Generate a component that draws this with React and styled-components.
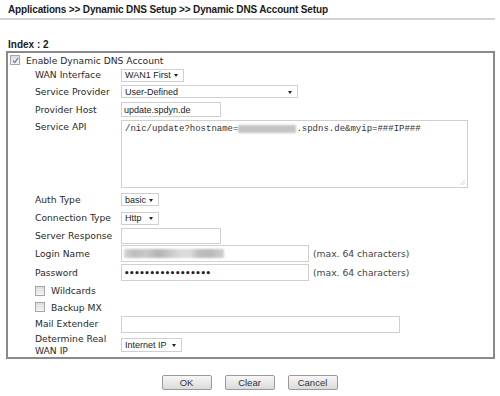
import React from 'react';
import styled, { createGlobalStyle } from 'styled-components';

const GlobalStyle = createGlobalStyle`
  html, body {
    margin: 0;
    padding: 0;
    background: #fff;
  }
  body {
    font-family: 'DejaVu Sans', Verdana, sans-serif;
    color: #222;
  }
`;

const Page = styled.div`
  width: 500px;
  height: 396px;
  overflow: hidden;
`;

const Title = styled.h1`
  margin: 0;
  width: 487px;
  padding: 3px 0 2px 8px;
  height: 13px;
  line-height: 13px;
  border-bottom: 2px solid #d2d2d2;
  font-family: 'Liberation Sans', Arial, sans-serif;
  font-size: 10px;
  letter-spacing: -0.15px;
  font-weight: bold;
  color: #1a1a1a;
  white-space: nowrap;
`;

const IndexLabel = styled.div`
  margin-top: 19px;
  padding-left: 8px;
  height: 12px;
  line-height: 12px;
  font-family: 'Liberation Sans', Arial, sans-serif;
  font-size: 10px;
  font-weight: bold;
  color: #1a1a1a;
`;

const Panel = styled.div`
  margin-left: 6px;
  width: 485px;
  border: 2px solid #8a8a8a;
  display: flex;
  flex-direction: column;
`;

const Row = styled.div`
  height: ${(p) => p.$h}px;
  display: flex;
  align-items: ${(p) => (p.$top ? 'flex-start' : 'center')};
  padding-left: ${(p) => (p.$indent ?? 27)}px;
  font-size: 9.2px;
  color: #2a2a2a;
`;

const Label = styled.div`
  width: 86px;
  flex: none;
  line-height: 12px;
  padding-top: ${(p) => (p.$top ? 2 : 0)}px;
`;

const Box = styled.span`
  width: 8px;
  height: 8px;
  flex: none;
  border: 1px solid #a6a6a6;
  background: linear-gradient(#dcdcdc, #f4f4f4);
  display: inline-flex;
  align-items: center;
  justify-content: center;
  margin-right: 6px;
`;

const CheckBox = ({ checked }) => (
  <Box>
    {checked && (
      <svg width="7" height="7" viewBox="0 0 7 7">
        <path d="M1 3.6 L2.8 5.6 L6 1" fill="none" stroke="#5a7aa8" strokeWidth="1.2" />
      </svg>
    )}
  </Box>
);

const Select = styled.div`
  position: relative;
  width: ${(p) => p.$w}px;
  height: ${(p) => p.$h || 13}px;
  box-sizing: border-box;
  border: 1px solid #cfcfcf;
  background: #fff;
  padding-left: 3px;
  display: flex;
  align-items: center;
  font-family: 'Liberation Sans', Arial, sans-serif;
  font-size: 9px;
  color: #222;
  &::after {
    content: '';
    position: absolute;
    right: 5px;
    top: 50%;
    margin-top: -1px;
    border-left: 2.5px solid transparent;
    border-right: 2.5px solid transparent;
    border-top: 3px solid #222;
  }
`;

const TextBox = styled.div`
  width: ${(p) => p.$w}px;
  height: ${(p) => p.$h}px;
  box-sizing: border-box;
  border: 1px solid #d0d0d0;
  background: #fff;
  padding-left: 2px;
  display: flex;
  align-items: center;
  font-family: ${(p) => (p.$dots ? "'DejaVu Sans', sans-serif" : "'Liberation Sans', Arial, sans-serif")};
  font-size: ${(p) => (p.$dots ? 8.6 : 9)}px;
  font-weight: ${(p) => (p.$dots ? 'bold' : 'normal')};
  letter-spacing: ${(p) => (p.$dots ? -0.4 : 0)}px;
  color: #222;
`;

const ApiArea = styled.div`
  position: relative;
  margin-top: 1px;
  width: 347px;
  height: 68px;
  box-sizing: border-box;
  border: 1px solid #d0d0d0;
  padding: 3px 3px;
  font-family: 'Liberation Mono', 'Courier New', monospace;
  font-size: 9px;
  line-height: 10px;
  color: #333;
  white-space: nowrap;
`;

const Grip = styled.svg`
  position: absolute;
  right: 1px;
  bottom: 1px;
`;

const Blur = styled.span`
  display: inline-block;
  vertical-align: middle;
  width: ${(p) => p.$w}px;
  height: ${(p) => p.$h}px;
  background: ${(p) => p.$bg};
  filter: blur(1.2px);
`;

const Hint = styled.span`
  margin-left: 4px;
  color: #444;
`;

const Buttons = styled.div`
  margin-top: 16px;
  display: flex;
  justify-content: center;
  gap: 13px;
  padding-right: 1px;
`;

const Button = styled.button`
  width: 50px;
  height: 15px;
  padding: 0;
  border: 1px solid #9a9a9a;
  border-radius: 2px;
  background: linear-gradient(#f7f7f7, #dadada);
  font-family: 'Liberation Sans', Arial, sans-serif;
  font-size: 9.5px;
  color: #333;
`;

const loginBlur =
  'linear-gradient(90deg, #d6d6d6 0, #bdbdbd 10%, #c9c9c9 22%, #b4b4b4 34%, #c4c4c4 44%, #dadada 56%, #dcdcdc 66%, #bfbfbf 74%, #b9b9b9 86%, #cfcfcf 100%)';

export default function App() {
  return (
    <Page>
      <GlobalStyle />
      <Title>Applications &gt;&gt; Dynamic DNS Setup &gt;&gt; Dynamic DNS Account Setup</Title>
      <IndexLabel>Index : 2</IndexLabel>
      <Panel>
        <Row $h={14} $indent={2}>
          <CheckBox checked />
          Enable Dynamic DNS Account
        </Row>
        <Row $h={16}>
          <Label>WAN Interface</Label>
          <Select $w={63}>WAN1 First</Select>
        </Row>
        <Row $h={17}>
          <Label>Service Provider</Label>
          <Select $w={177}>User-Defined</Select>
        </Row>
        <Row $h={19}>
          <Label>Provider Host</Label>
          <TextBox $w={100} $h={15}>update.spdyn.de</TextBox>
        </Row>
        <Row $h={71} $top>
          <Label $top>Service API</Label>
          <ApiArea>
            /nic/update?hostname=
            <Blur $w={58} $h={8} $bg="#c4c4c4" />
            .spdns.de&amp;myip=###IP###
            <Grip width="7" height="7" viewBox="0 0 7 7">
              <path d="M6 1 L1 6 M6 3.5 L3.5 6" stroke="#c6c6c6" strokeWidth="0.8" />
            </Grip>
          </ApiArea>
        </Row>
        <Row $h={19}>
          <Label>Auth Type</Label>
          <Select $w={38}>basic</Select>
        </Row>
        <Row $h={18}>
          <Label>Connection Type</Label>
          <Select $w={38}>Http</Select>
        </Row>
        <Row $h={17}>
          <Label>Server Response</Label>
          <TextBox $w={100} $h={16} />
        </Row>
        <Row $h={19}>
          <Label>Login Name</Label>
          <TextBox $w={188} $h={17}>
            <Blur $w={100} $h={9} $bg={loginBlur} />
          </TextBox>
          <Hint>(max. 64 characters)</Hint>
        </Row>
        <Row $h={19}>
          <Label>Password</Label>
          <TextBox $w={188} $h={17} $dots>
            •••••••••••••••••
          </TextBox>
          <Hint>(max. 64 characters)</Hint>
        </Row>
        <Row $h={17}>
          <CheckBox />
          Wildcards
        </Row>
        <Row $h={16}>
          <CheckBox />
          Backup MX
        </Row>
        <Row $h={18}>
          <Label>Mail Extender</Label>
          <TextBox $w={279} $h={17} />
        </Row>
        <Row $h={24}>
          <Label>
            Determine Real
            <br />
            WAN IP
          </Label>
          <Select $w={61} $h={14}>Internet IP</Select>
        </Row>
      </Panel>
      <Buttons>
        <Button>OK</Button>
        <Button>Clear</Button>
        <Button>Cancel</Button>
      </Buttons>
    </Page>
  );
}
